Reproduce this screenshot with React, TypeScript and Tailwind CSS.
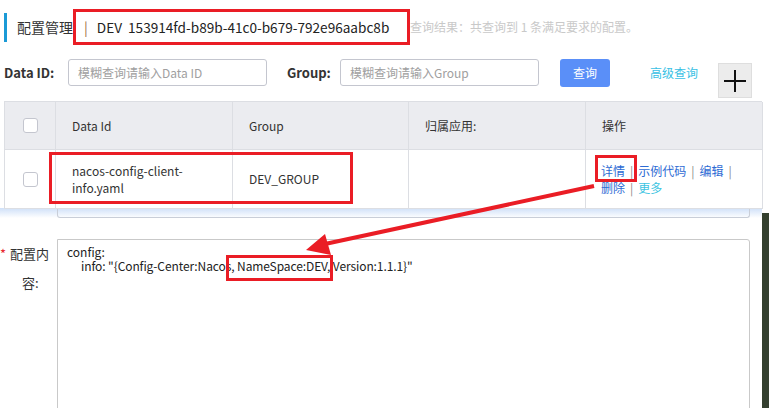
import React from "react";

const font = "font-['Noto_Sans_CJK_SC','Noto_Sans',sans-serif]";

function Checkbox() {
  return (
    <span className="block h-[15px] w-[15px] rounded-[3px] border border-[#c4c6cf] bg-white" />
  );
}

function Sep() {
  return <span className="mx-[5px] text-[#8a8a8a]">|</span>;
}

export default function App() {
  return (
    <div
      className={`relative h-[408px] w-[769px] overflow-hidden bg-white text-[#333] ${font}`}
    >
      {/* list page */}
      <div className="relative z-10 h-[208px] bg-white pt-[9px]">
        <div className="flex h-[36px] items-center">
          <span className="ml-[4px] h-[29px] w-[3px] shrink-0 bg-[#1b9ad6]" />
          <span className="ml-[10px] shrink-0 text-[14px] text-[#333]">配置管理</span>
          <span className="flex h-[36px] w-[337px] shrink-0 items-center border-[3px] border-[#ea1d25] pl-[8px] text-[14px] text-[#222]">
            <span className="text-[#a07040]">|</span>
            <span className="ml-[9px] whitespace-pre text-[13.6px]">DEV  153914fd-b89b-41c0-b679-792e96aabc8b</span>
          </span>
          <span className="shrink-0 text-[12px] text-[#c9c9c9]">
            查询结果：共查询到 1 条满足要求的配置。
          </span>
        </div>

        <div className="mt-[14px] flex items-start">
          <span className="flex h-[27px] w-[68px] shrink-0 items-center pl-[4px] text-[13px] font-bold text-[#333]">
            Data ID:
          </span>
          <div className="flex h-[27px] w-[199px] shrink-0 items-center rounded-[3px] border border-[#c4c6cf] pl-[9px] text-[12px] text-[#a0a0a0]">
            模糊查询请输入Data ID
          </div>
          <span className="ml-[20px] flex h-[27px] w-[53px] shrink-0 items-center text-[13px] font-bold text-[#333]">
            Group:
          </span>
          <div className="flex h-[27px] w-[199px] shrink-0 items-center rounded-[3px] border border-[#c4c6cf] pl-[9px] text-[12px] text-[#a0a0a0]">
            模糊查询请输入Group
          </div>
          <button className="ml-[21px] flex h-[28px] w-[50px] shrink-0 items-center justify-center rounded-[3px] bg-[#5a8ff8] text-[12px] text-white">
            查询
          </button>
          <span className="ml-[40px] flex h-[27px] w-[48px] shrink-0 items-center whitespace-nowrap text-[12px] text-[#38bfe4]">
            高级查询
          </span>
          <div className="ml-[20px] mt-[4px] flex h-[35px] w-[34px] shrink-0 items-center justify-center border border-[#dedede] bg-[#ececec]">
            <svg width="22" height="22" viewBox="0 0 22 22">
              <line x1="0" y1="11" x2="22" y2="11" stroke="#111" strokeWidth="2" />
              <line x1="11" y1="0" x2="11" y2="22" stroke="#111" strokeWidth="2" />
            </svg>
          </div>
        </div>

        <div className="mx-[4px] mt-[3px] grid w-[758px] grid-cols-[51px_177px_176px_177px_177px] border-l border-t border-[#dcdee3] text-[12px]">
          <div className="flex h-[48px] items-center justify-center border-b border-r border-[#dcdee3] bg-[#ebecf0]">
            <Checkbox />
          </div>
          <div className="flex h-[48px] items-center border-b border-r border-[#dcdee3] bg-[#ebecf0] pl-[16px]">
            Data Id
          </div>
          <div className="flex h-[48px] items-center border-b border-r border-[#dcdee3] bg-[#ebecf0] pl-[16px]">
            Group
          </div>
          <div className="flex h-[48px] items-center border-b border-r border-[#dcdee3] bg-[#ebecf0] pl-[16px]">
            归属应用:
          </div>
          <div className="flex h-[48px] items-center border-b border-r border-[#dcdee3] bg-[#ebecf0] pl-[16px]">
            操作
          </div>

          <div className="flex h-[59px] items-center justify-center border-b border-r border-[#dcdee3]">
            <Checkbox />
          </div>
          <div className="flex h-[59px] items-center border-b border-r border-[#dcdee3] pl-[16px] leading-[17px]">
            <span>
              nacos-config-client-
              <br />
              info.yaml
            </span>
          </div>
          <div className="flex h-[59px] items-center border-b border-r border-[#dcdee3] pl-[16px]">
            DEV_GROUP
          </div>
          <div className="h-[59px] border-b border-r border-[#dcdee3]" />
          <div className="flex h-[59px] items-center border-b border-r border-[#dcdee3] pl-[15px] leading-[17px]">
            <div>
              <div>
                <span className="text-[#2d6bd4]">详情</span>
                <Sep />
                <span className="text-[#2d6bd4]">示例代码</span>
                <Sep />
                <span className="text-[#2d6bd4]">编辑</span>
                <Sep />
              </div>
              <div>
                <span className="text-[#2d6bd4]">删除</span>
                <Sep />
                <span className="text-[#3cc4e2]">更多</span>
              </div>
            </div>
          </div>
        </div>
      </div>

      {/* edit page underneath */}
      <div className="flex h-[200px]">
        <div className="w-[762px]">
          <div className="h-[10px] bg-gradient-to-b from-[#cfe0f8] to-white">
            <div className="ml-[57px] h-full w-[693px] rounded-b-[3px] border-x border-b border-[#c9ced8]" />
          </div>
          <div className="flex">
            <div className="w-[57px] shrink-0 pt-[21px] text-[13px] leading-[29px]">
              <div className="whitespace-nowrap">
                <span className="text-[#e8262f]">*</span>
                <span className="ml-[4px]">配置内</span>
              </div>
              <div className="pl-[22px]">容:</div>
            </div>
            <div className="mt-[21px] h-[200px] w-[693px] rounded-tr-[3px] border border-[#c9c9c9] pl-[9px] pt-[5px] text-[12px] leading-[14px] text-[#222]">
              <div>config:</div>
              <div className="pl-[14px] tracking-[-0.1px]">
                info: "{"{"}Config-Center:Nacos, NameSpace:DEV, Version:1.1.1{"}"}"
              </div>
            </div>
          </div>
        </div>
        <div className="mt-[5px] w-[7px] bg-[#34402f]" />
      </div>

      {/* annotations */}
      <div className="absolute left-[49px] top-[152px] z-20 h-[52px] w-[304px] border-[3px] border-[#ea1d25]" />
      <div className="absolute left-[595px] top-[155px] z-20 h-[27px] w-[42px] border-[3px] border-[#ea1d25]" />
      <div className="absolute left-[226px] top-[255px] z-20 h-[26px] w-[107px] border-[3px] border-[#ea1d25]" />
      <svg className="absolute left-0 top-0 z-20" width="769" height="408">
        <line x1="594" y1="186" x2="325" y2="244" stroke="#ea1d25" strokeWidth="4" />
        <polygon points="306,250 325,234 331,255" fill="#ea1d25" />
      </svg>
    </div>
  );
}
